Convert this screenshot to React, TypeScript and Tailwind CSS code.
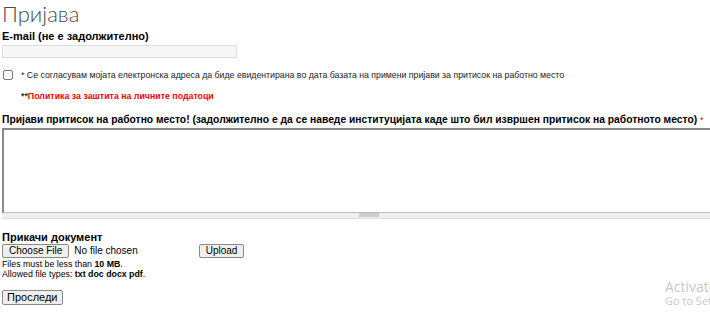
import React from "react";

export default function App() {
  return (
    <div className="relative w-[710px] h-[316px] overflow-hidden bg-white text-black" style={{ fontFamily: '"Liberation Sans", Arial, sans-serif' }}>
      <div className="pl-[2px]">
        <h1 className="text-[22px] leading-[22px] pt-[3px] text-[#4a4a4a] font-light" style={{ fontFamily: 'Lato, "Open Sans", sans-serif' }}>Пријава</h1>
        <div className="mt-[5px] text-[11px] leading-[12px] font-bold">E-mail (не е задолжително)</div>
        <div className="mt-[3px] w-[235px] h-[13px] border border-[#ddd] bg-[#f7f7f7]"></div>
        <div className="mt-[12px] flex items-center">
          <div className="ml-[1px] w-[10px] h-[10px] border border-[#767676] rounded-[2px] bg-white"></div>
          <span className="ml-[8px] text-[8.75px] leading-[10px] text-[#222]">* Се согласувам мојата електронска адреса да биде евидентирана во дата базата на примени пријави за притисок на работно место</span>
        </div>
        <div className="mt-[11px] ml-[19px] text-[8.8px] leading-[10px] font-bold text-[#ff0000]"><span className="text-[#333]">**</span>Политика за заштита на личните податоци</div>
        <div className="mt-[13px] text-[10.3px] leading-[12px] font-bold whitespace-nowrap">Пријави притисок на работно место! (задолжително е да се наведе институцијата каде што бил извршен притисок на работното место) <span className="text-[#e00] font-normal text-[9px]">*</span></div>
        <div className="mt-[2px] w-[720px] h-[85px] border-t-2 border-l-2 border-[#888] border-b border-b-[#bbb] bg-white"></div>
        <div className="w-[720px] h-[6px] bg-[#eee] border-b border-[#ddd] flex justify-center">
          <div className="ml-[14px] w-[20px] h-[4px] bg-[#ccc]"></div>
        </div>
        <div className="mt-[12px] text-[11px] leading-[12px] font-bold">Прикачи документ</div>
        <div className="mt-[1px] flex items-center h-[14px]">
          <div className="h-[14px] px-[6px] border border-[#888] bg-[#efefef] rounded-[2px] text-[10px] leading-[12px] flex items-center">Choose File</div>
          <span className="ml-[5px] text-[10px] leading-[14px]">No file chosen</span>
          <div className="ml-[61px] h-[14px] px-[6px] border border-[#888] bg-[#efefef] rounded-[2px] text-[10px] leading-[12px] flex items-center">Upload</div>
        </div>
        <div className="mt-[2px] text-[8.8px] leading-[9px]">Files must be less than <b>10 MB</b>.</div>
        <div className="mt-[1px] text-[8.8px] leading-[9px]">Allowed file types: <b>txt doc docx pdf</b>.</div>
        <div className="mt-[11px] inline-flex h-[15px] px-[4px] border border-[#888] bg-[#efefef] rounded-[2px] text-[11px] items-center">Проследи</div>
      </div>
      <div className="absolute left-[665px] top-[279px] text-[#c8c8c8] whitespace-nowrap" style={{ fontFamily: '"Open Sans", sans-serif' }}>
        <div className="text-[14px] leading-[15px]">Activate Windows</div>
        <div className="text-[11px] leading-[14px]">Go to Settings to activate Windows.</div>
      </div>
    </div>
  );
}
